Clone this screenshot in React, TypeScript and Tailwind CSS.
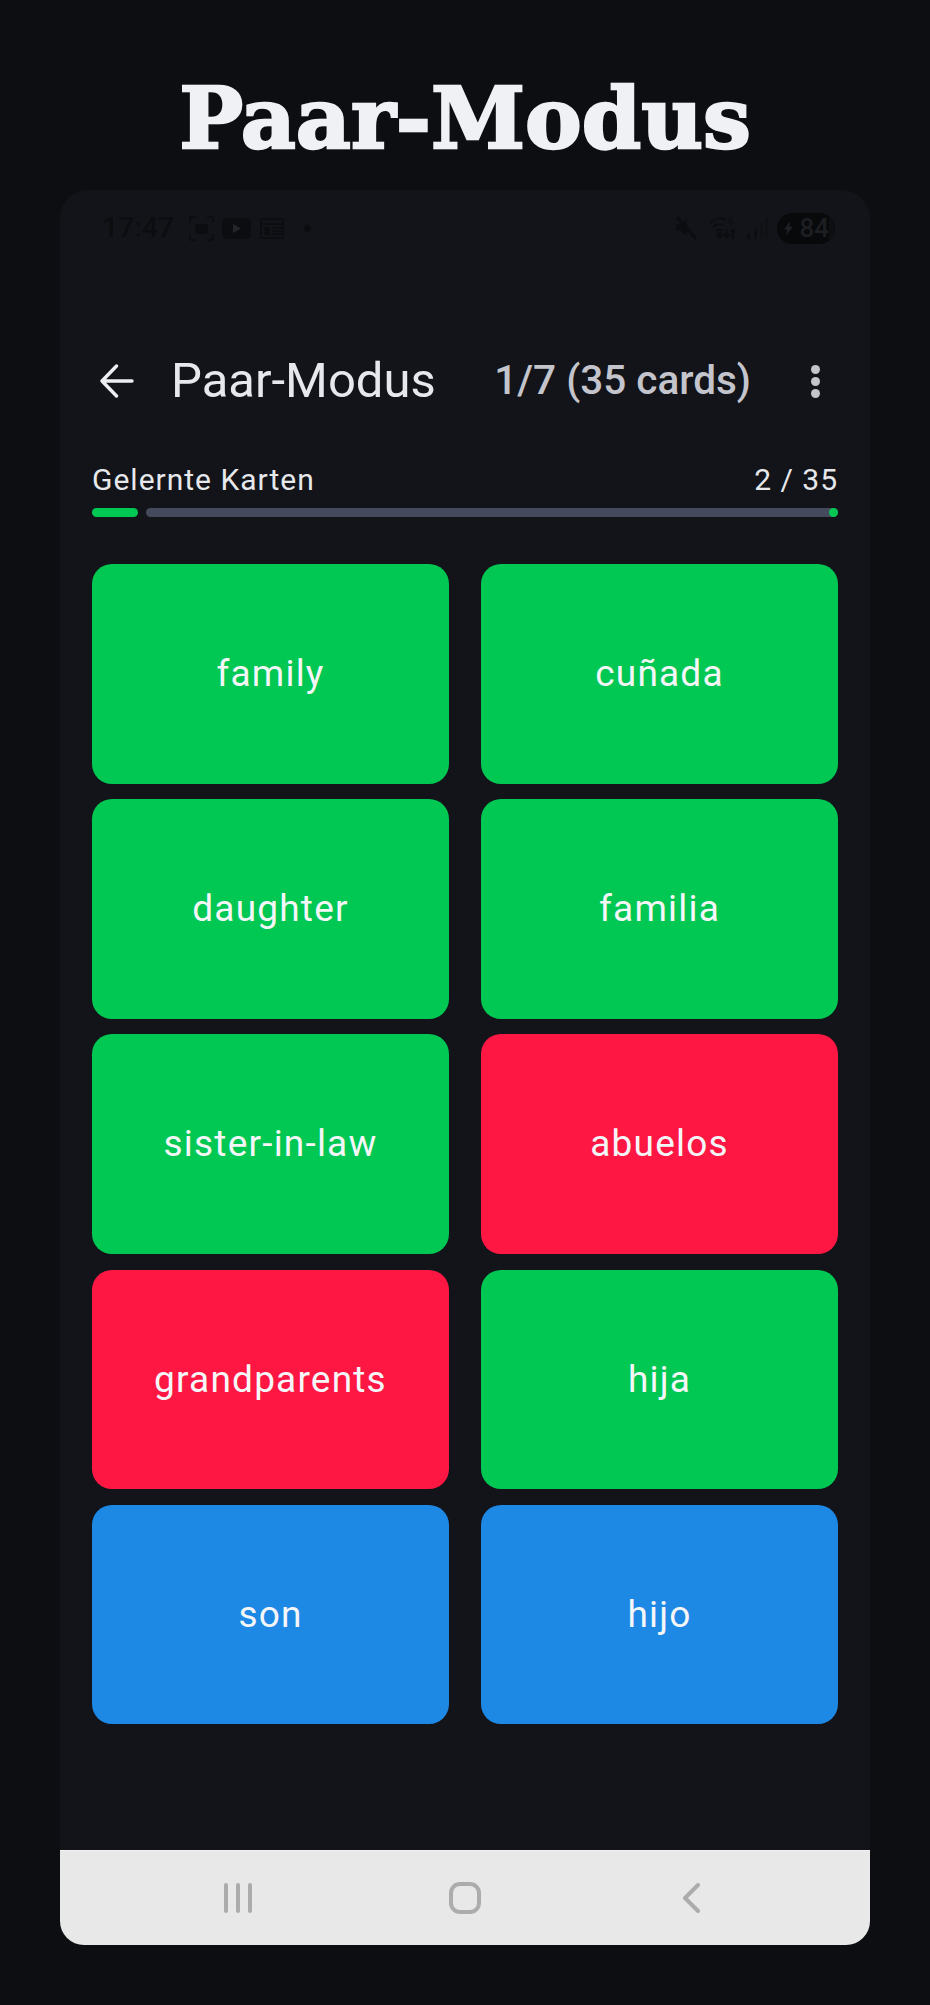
const cards = [
  { label: 'family', color: 'bg-[#00c853]' },
  { label: 'cuñada', color: 'bg-[#00c853]' },
  { label: 'daughter', color: 'bg-[#00c853]' },
  { label: 'familia', color: 'bg-[#00c853]' },
  { label: 'sister-in-law', color: 'bg-[#00c853]' },
  { label: 'abuelos', color: 'bg-[#ff1744]' },
  { label: 'grandparents', color: 'bg-[#ff1744]' },
  { label: 'hija', color: 'bg-[#00c853]' },
  { label: 'son', color: 'bg-[#1e88e5]' },
  { label: 'hijo', color: 'bg-[#1e88e5]' },
];

function StatusBar() {
  return (
    <div className="flex h-[76px] items-center justify-between pl-[42px] pr-[35px] text-[#0c0d10]">
      <div className="flex items-center">
        <span className="text-[28.5px] leading-none font-medium">17:47</span>
        {/* screenshot */}
        <svg className="ml-[15px]" width="25" height="25" viewBox="0 0 25 25" fill="none" stroke="currentColor" strokeWidth="2">
          <path d="M1 7V3a2 2 0 0 1 2-2h4M18 1h4a2 2 0 0 1 2 2v4M24 18v4a2 2 0 0 1-2 2h-4M7 24H3a2 2 0 0 1-2-2v-4" />
          <rect x="7" y="9" width="11" height="8" rx="2" fill="currentColor" />
        </svg>
        {/* youtube */}
        <svg className="ml-[8px]" width="29" height="21" viewBox="0 0 29 21">
          <rect width="29" height="21" rx="5" fill="currentColor" />
          <path d="M11 6l8 4.5-8 4.5z" fill="#23252a" />
        </svg>
        {/* news */}
        <svg className="ml-[9px]" width="24" height="22" viewBox="0 0 24 22" fill="none" stroke="currentColor" strokeWidth="2">
          <rect x="1" y="2" width="22" height="19" rx="1" />
          <path d="M1 7h22M12 11h11M12 14h11M12 17h11" />
          <rect x="4" y="10" width="6" height="8" fill="currentColor" stroke="none" />
        </svg>
        <span className="ml-[20px] size-[7px] rounded-full bg-current" />
      </div>
      <div className="flex items-center">
        {/* mute */}
        <svg width="22" height="24" viewBox="0 0 22 24" fill="currentColor">
          <path d="M1 8h4l7-6v17L5 15H1z" />
          <path d="M2 1l19 22" stroke="currentColor" strokeWidth="3" />
        </svg>
        {/* wifi */}
        <svg className="ml-[12px]" width="27" height="26" viewBox="0 0 26 24" fill="none" stroke="currentColor" strokeWidth="2">
          <path d="M1 7c5-5 11-5 15-3M4 11c3-3 7-3 10-1M7 15c2-2 4-2 6 0" />
          <circle cx="10" cy="19" r="2" fill="currentColor" />
          <path d="M17 13v8M14 18l3 3 3-3M23 22v-8M21 16l2-2 2 2" />
          <text x="18" y="9" fontSize="10" fill="currentColor" stroke="none">6</text>
        </svg>
        {/* signal */}
        <svg className="ml-[10px]" width="22" height="24" viewBox="0 0 22 24" fill="currentColor">
          <rect x="1" y="18" width="3" height="5" />
          <rect x="8" y="13" width="3" height="10" />
          <rect x="14" y="7" width="3" height="16" opacity="0.5" />
          <rect x="19" y="1" width="3" height="22" opacity="0.5" />
        </svg>
        <div className="ml-[9px] flex h-[31px] w-[58px] items-center overflow-hidden rounded-full bg-[#08090b] pl-[7px]">
          <svg width="14" height="21" viewBox="0 0 14 21" fill="#1f2126">
            <path d="M9 0L0 12h5l-2 9 10-13H8z" />
          </svg>
          <span className="ml-[6px] text-[26px] leading-none font-medium text-[#1c1e22]">84</span>
          <span className="ml-auto h-full w-[9px] bg-[#0e0f13]" />
        </div>
      </div>
    </div>
  );
}

function AppBar() {
  return (
    <div className="mt-[75px] flex h-[80px] items-center pl-[40px] pr-[50px]">
      <svg width="34" height="34" viewBox="0 0 34 34" fill="none" stroke="#eceef2" strokeWidth="3.4" strokeLinecap="round" strokeLinejoin="round">
        <path d="M32 17H2M16.5 2L2 17l14.5 15" />
      </svg>
      <span className="ml-[37px] -translate-y-[1px] text-[49px] leading-none text-[#e6e8ec]">Paar-Modus</span>
      <span className="ml-auto -translate-y-[1px] text-[40.5px] leading-none font-medium text-[#c4c5cc]">1/7 (35 cards)</span>
      <div className="ml-[60px] flex flex-col gap-[3px]">
        <span className="size-[9px] rounded-full bg-[#c4c5cc]" />
        <span className="size-[9px] rounded-full bg-[#c4c5cc]" />
        <span className="size-[9px] rounded-full bg-[#c4c5cc]" />
      </div>
    </div>
  );
}

function Progress() {
  return (
    <div className="mt-[41px] px-[32px]">
      <div className="flex items-baseline justify-between text-[30px] leading-[36px] tracking-[1px] text-[#e6e8ec]">
        <span>Gelernte Karten</span>
        <span>2 / 35</span>
      </div>
      <div className="mt-[10px] flex h-[9px] gap-[8px]">
        <div className="w-[46px] rounded-full bg-[#00c853]" />
        <div className="flex flex-1 justify-end rounded-full bg-[#444a5c]">
          <span className="size-[9px] rounded-full bg-[#00c853]" />
        </div>
      </div>
    </div>
  );
}

export default function App() {
  return (
    <div className="flex h-[2005px] w-[930px] flex-col items-center overflow-hidden bg-[#0c0e12] font-['Roboto',sans-serif]">
      <h1 className="mt-[68px] h-[122px] scale-x-[1.0] text-[85px] leading-[100px] font-bold text-[#f0f1f5] [-webkit-text-stroke:2.5px_#f0f1f5] font-['DejaVu_Serif',serif]">
        Paar-Modus
      </h1>
      <div className="flex h-[1755px] w-[810px] flex-col overflow-hidden rounded-t-[28px] rounded-b-[24px] bg-[#121419]">
        <StatusBar />
        <AppBar />
        <Progress />
        <div className="mt-[47px] grid grid-cols-2 gap-x-[32px] gap-y-[15.6px] px-[32px]">
          {cards.map((card) => (
            <div
              key={card.label}
              className={`flex h-[219.6px] items-center justify-center rounded-[20px] text-[37px] tracking-[1.2px] text-[#f5f6f8] ${card.color}`}
            >
              {card.label}
            </div>
          ))}
        </div>
        <div className="mt-auto flex h-[95px] items-center border-t border-t-[#f2f2f2] bg-[#e8e8e8] pl-[164px]">
          <svg width="28" height="30" viewBox="0 0 28 30" fill="none" stroke="#acacac" strokeWidth="4" strokeLinecap="round">
            <path d="M2 2v26M14 2v26M26 2v26" />
          </svg>
          <svg className="ml-[197px]" width="32" height="32" viewBox="0 0 32 32" fill="none" stroke="#acacac" strokeWidth="4">
            <rect x="2" y="2" width="28" height="28" rx="9" />
          </svg>
          <svg className="ml-[201px]" width="18" height="30" viewBox="0 0 18 30" fill="none" stroke="#acacac" strokeWidth="4" strokeLinecap="round" strokeLinejoin="round">
            <path d="M16 2L3 15l13 13" />
          </svg>
        </div>
      </div>
    </div>
  );
}
